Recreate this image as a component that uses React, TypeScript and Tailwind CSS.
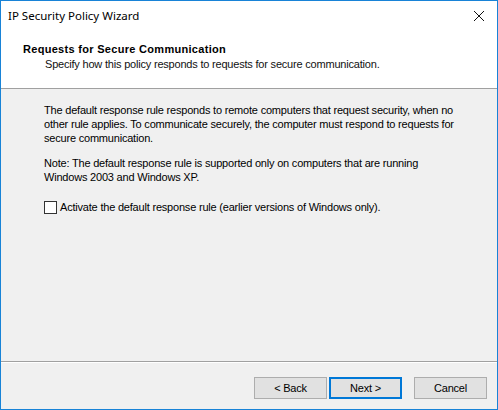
import React from 'react';

const WinButton: React.FC<{ label: string; primary?: boolean }> = ({ label, primary }) => (
  <button
    className={
      'w-[73px] h-[22px] bg-[#e1e1e1] text-[11px] tracking-[-0.2px] text-black flex items-center justify-center ' +
      (primary ? 'border-2 border-[#0078d7]' : 'border border-[#adadad]')
    }
  >
    {label}
  </button>
);

const App: React.FC = () => {
  return (
    <div
      className="w-[498px] h-[410px] border border-[#1883d7] bg-[#f0f0f0] flex flex-col text-black"
      style={{ fontFamily: '"Liberation Sans", Arial, sans-serif' }}
    >
      {/* Title bar */}
      <div className="h-[30px] bg-white flex items-center justify-between pl-[7px] pr-[12px]">
        <span className="text-[11.5px] font-['Noto_Sans',sans-serif] text-black">IP Security Policy Wizard</span>
        <svg width="12" height="12" viewBox="0 0 12 12">
          <path d="M1 1 L11 11 M11 1 L1 11" stroke="#111" strokeWidth="1" fill="none" />
        </svg>
      </div>

      {/* Header */}
      <div className="h-[58px] bg-white border-b border-[#a0a0a0] pl-[22px] pt-[11px]">
        <div className="text-[11px] font-bold leading-[14px] tracking-[0.3px]">Requests for Secure Communication</div>
        <div className="text-[11px] leading-[14px] pl-[22px] mt-[1px] tracking-[-0.2px] text-[#111]">
          Specify how this policy responds to requests for secure communication.
        </div>
      </div>

      {/* Body */}
      <div className="flex-1 pl-[43px] pr-[20px] pt-[14px] text-[11px] leading-[14px] tracking-[-0.2px] border-b border-[#a0a0a0]">
        <p>
          The default response rule responds to remote computers that request security, when no
          <br />
          other rule applies. To communicate securely, the computer must respond to requests for
          <br />
          secure communication.
        </p>
        <p className="mt-[11px]">
          Note: The default response rule is supported only on computers that are running
          <br />
          Windows 2003 and Windows XP.
        </p>
        <label className="flex items-center mt-[16px] gap-[3px]">
          <span className="w-[13px] h-[13px] border border-[#333] bg-white inline-block" />
          <span>Activate the default response rule (earlier versions of Windows only).</span>
        </label>
      </div>

      {/* Buttons */}
      <div className="h-[47px] border-t border-white flex items-start justify-end pt-[14px] pr-[10px]">
        <div className="flex gap-[2px]">
          <WinButton label="< Back" />
          <WinButton label="Next >" primary />
        </div>
        <div className="ml-[12px]">
          <WinButton label="Cancel" />
        </div>
      </div>
    </div>
  );
};

export default App;
